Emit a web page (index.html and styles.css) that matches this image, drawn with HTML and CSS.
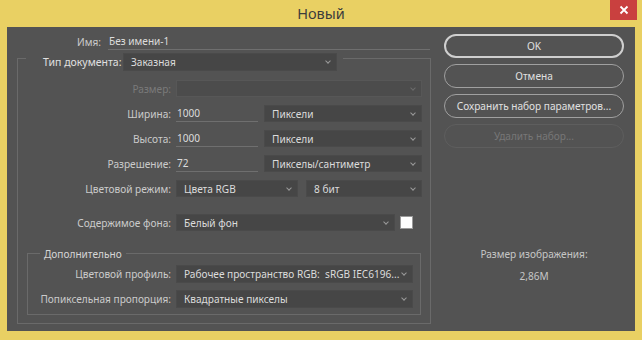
FILE: index.html
```html
<!DOCTYPE html>
<html lang="ru">
<head>
    <meta charset="UTF-8">
    <title>Новый</title>
    <link rel="stylesheet" href="styles.css">
</head>
<body>
    <div class="window">
        <div class="titlebar">
            <span class="title-spacer"></span>
            <div class="title">Новый</div>
            <div class="close">
                <svg width="10" height="10" viewBox="0 0 10 10"><path d="M1.5 1.5 L8.5 8.5 M8.5 1.5 L1.5 8.5" stroke="#fff" stroke-width="1.8" /></svg>
            </div>
        </div>

        <div class="content">
            <div class="form">
                <div class="name-row">
                    <div class="label name-label">Имя:</div>
                    <div class="text-field name-field">Без имени-1</div>
                </div>

                <div class="group doc-group">
                    <div class="group-head doc-head">
                        <div class="label head-label">Тип документа:</div>
                        <div class="select doc-type">Заказная<i class="chev"></i></div>
                    </div>

                    <div class="row first">
                        <div class="label disabled">Размер:</div>
                        <div class="select full disabled"><i class="chev"></i></div>
                    </div>
                    <div class="row">
                        <div class="label">Ширина:</div>
                        <div class="text-field num">1000</div>
                        <div class="select unit">Пиксели<i class="chev"></i></div>
                    </div>
                    <div class="row">
                        <div class="label">Высота:</div>
                        <div class="text-field num">1000</div>
                        <div class="select unit">Пиксели<i class="chev"></i></div>
                    </div>
                    <div class="row">
                        <div class="label">Разрешение:</div>
                        <div class="text-field num">72</div>
                        <div class="select unit">Пикселы/сантиметр<i class="chev"></i></div>
                    </div>
                    <div class="row">
                        <div class="label">Цветовой режим:</div>
                        <div class="select mode">Цвета RGB<i class="chev"></i></div>
                        <div class="select depth">8 бит<i class="chev"></i></div>
                    </div>
                    <div class="row bg-row">
                        <div class="label">Содержимое фона:</div>
                        <div class="select bg">Белый фон<i class="chev"></i></div>
                        <div class="swatch"></div>
                    </div>

                    <div class="group extra-group">
                        <div class="group-head extra-head">Дополнительно</div>
                        <div class="row extra first">
                            <div class="label">Цветовой профиль:</div>
                            <div class="select profile">Рабочее пространство RGB:&nbsp; sRGB IEC6196...<i class="chev"></i></div>
                        </div>
                        <div class="row extra">
                            <div class="label">Попиксельная пропорция:</div>
                            <div class="select profile">Квадратные пикселы<i class="chev"></i></div>
                        </div>
                    </div>
                </div>
            </div>

            <div class="side">
                <div class="btn default">OK</div>
                <div class="btn">Отмена</div>
                <div class="btn">Сохранить набор параметров...</div>
                <div class="btn disabled">Удалить набор...</div>

                <div class="image-size">
                    <div>Размер изображения:</div>
                    <div>2,86M</div>
                </div>
            </div>
        </div>
    </div>
</body>
</html>
```

FILE: styles.css
```css
body {
    margin: 0;
    background: #e9d063;
    font-family: "Noto Sans", "Open Sans", sans-serif;
    font-size: 10.1px;
    color: #d2d2d2;
}

.window {
    width: 642px;
    height: 340px;
    display: flex;
    flex-direction: column;
}

.titlebar {
    height: 27px;
    display: flex;
    align-items: flex-start;
}

.title-spacer {
    width: 32px;
}

.title {
    flex: 1;
    text-align: center;
    font-size: 14.5px;
    line-height: 27px;
    color: #3c3c3c;
}

.close {
    width: 27px;
    height: 20px;
    margin-right: 5px;
    background: #c9403f;
    display: flex;
    align-items: center;
    justify-content: center;
}

.content {
    height: 304px;
    margin: 0 7px 0 7px;
    background: #535353;
    display: flex;
    padding-top: 7px;
    box-sizing: border-box;
}

.form {
    width: 429px;
}

.label {
    text-align: right;
    white-space: nowrap;
    color: #cbcbcb;
}

.label.disabled {
    color: #7a7a7a;
}

.name-row {
    display: flex;
    align-items: center;
    height: 16px;
    gap: 7px;
}

.name-label {
    width: 94px;
}

.text-field {
    height: 16px;
    line-height: 15px;
    box-sizing: border-box;
    border-bottom: 1px solid #6f6f6f;
    padding-left: 1px;
    color: #dcdcdc;
}

.name-field {
    width: 322px;
}

.group {
    border: 1px solid #6a6a6a;
    box-sizing: border-box;
}

.doc-group {
    margin: 8px 0 0 10px;
    width: 414px;
    padding: 0 7px 0 0;
}

.group-head {
    background: #535353;
    display: flex;
    align-items: center;
    width: fit-content;
}

.doc-head {
    margin: -6px 0 0 8px;
    padding: 0 6px 0 17px;
    gap: 5px;
    height: 18px;
}

.head-label {
    width: 75px;
    text-align: left;
    font-size: 10.5px;
    color: #e0e0e0;
}

.select {
    position: relative;
    height: 17px;
    line-height: 16px;
    box-sizing: border-box;
    background: #464646;
    border: 1px solid #4a4a4a;
    padding-left: 7px;
    color: #dcdcdc;
    white-space: nowrap;
}

.select.disabled {
    background: #4c4c4c;
    border-color: #575757;
}

.chev {
    position: absolute;
    right: 6px;
    top: 5px;
    width: 3px;
    height: 3px;
    border-right: 1px solid #9a9a9a;
    border-bottom: 1px solid #9a9a9a;
    transform: rotate(45deg);
}

.disabled .chev {
    border-color: #6c6c6c;
}

.doc-type {
    width: 214px;
    height: 18px;
}

.row {
    display: flex;
    align-items: center;
    height: 17px;
    margin-top: 8px;
}

.row .label {
    width: 153px;
    margin-right: 5px;
}

.row.first {
    margin-top: 9px;
}

.full {
    width: 246px;
}

.num {
    width: 82px;
    margin-right: 6px;
}

.unit {
    width: 158px;
}

.mode {
    width: 122px;
    margin-right: 8px;
}

.depth {
    width: 116px;
}

.bg-row {
    margin-top: 17px;
}

.bg {
    width: 219px;
    margin-right: 5px;
}

.swatch {
    width: 13px;
    height: 13px;
    background: #ffffff;
    border: 1px solid #9a9a9a;
    box-sizing: border-box;
}

.extra-group {
    margin: 22px 0 8px 9px;
    width: 394px;
    padding: 0 6px 6px 0;
}

.extra-head {
    margin: -7px 0 0 12px;
    padding: 0 4px;
    height: 14px;
    color: #d6d6d6;
}

.row.extra {
    height: 18px;
    margin-top: 7px;
}

.row.extra.first {
    margin-top: 4px;
}

.row.extra .label {
    width: 143px;
}

.profile {
    width: 237px;
    height: 18px;
}

.side {
    width: 180px;
    margin-left: 8px;
    display: flex;
    flex-direction: column;
    gap: 6px;
}

.btn {
    height: 24px;
    box-sizing: border-box;
    border: 1px solid #a0a0a0;
    border-radius: 12px;
    text-align: center;
    line-height: 22px;
    color: #e0e0e0;
}

.btn.default {
    border: 2px solid #cfcfcf;
    line-height: 20px;
}

.btn.disabled {
    border-color: #5e5e5e;
    color: #777777;
}

.image-size {
    margin-top: 93px;
    text-align: center;
    line-height: 14px;
    display: flex;
    flex-direction: column;
    gap: 8px;
    color: #c6c6c6;
}
```
